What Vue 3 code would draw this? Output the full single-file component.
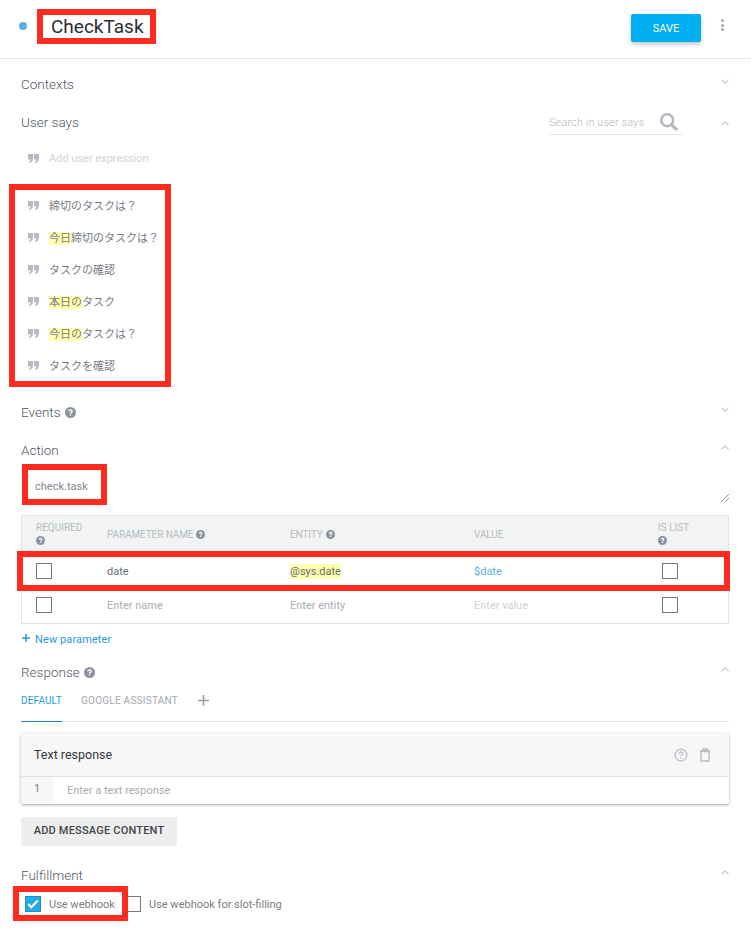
<script setup>
const expressions = [
  { mark: '', text: '締切のタスクは？' },
  { mark: '今日', text: '締切のタスクは？' },
  { mark: '', text: 'タスクの確認' },
  { mark: '本日の', text: 'タスク' },
  { mark: '今日の', text: 'タスクは？' },
  { mark: '', text: 'タスクを確認' }
]

const annotations = [
  { left: 37, top: 9, width: 119, height: 35 },
  { left: 9, top: 184, width: 162, height: 203 },
  { left: 22, top: 464, width: 85, height: 41 },
  { left: 17, top: 551, width: 713, height: 40 },
  { left: 13, top: 886, width: 115, height: 35 }
]
</script>

<template>
  <div class="page">
    <header class="top">
      <span class="dot" />
      <h1 class="title">CheckTask</h1>
      <button class="save">SAVE</button>
      <span class="more"><i /><i /><i /></span>
    </header>

    <main class="body">
      <div class="head">
        <span>Contexts</span>
        <svg class="chev" width="8" height="5" viewBox="0 0 8 5"><path d="M.4.6L4 4.2 7.6.6" /></svg>
      </div>

      <div class="head">
        <span>User says</span>
        <div class="search">
          <span class="search-text">Search in user says</span>
          <svg width="20" height="20" viewBox="0 0 20 20" fill="none" stroke="#b3b8c2">
            <circle cx="8.2" cy="8.2" r="6" stroke-width="2.6" />
            <path d="M12.6 12.6l5.6 5.6" stroke-width="3.2" />
          </svg>
        </div>
        <svg class="chev low" width="8" height="5" viewBox="0 0 8 5"><path d="M.4 4.4L4 .8l3.6 3.6" /></svg>
      </div>

      <div class="expr add">
        <svg class="quote" width="11" height="9" viewBox="0 0 11 9"><path d="M0 0h5v4.6C5 7 3.6 8.6 1.4 9L1 7.6c1-.3 1.5-1 1.5-2H0zM6 0h5v4.6C11 7 9.6 8.6 7.4 9L7 7.6c1-.3 1.5-1 1.5-2H6z" /></svg>
        <span>Add user expression</span>
      </div>

      <div class="expr-list">
        <div v-for="(e, i) in expressions" :key="i" class="expr">
          <svg class="quote" width="11" height="9" viewBox="0 0 11 9"><path d="M0 0h5v4.6C5 7 3.6 8.6 1.4 9L1 7.6c1-.3 1.5-1 1.5-2H0zM6 0h5v4.6C11 7 9.6 8.6 7.4 9L7 7.6c1-.3 1.5-1 1.5-2H6z" /></svg>
          <span><mark v-if="e.mark">{{ e.mark }}</mark>{{ e.text }}</span>
        </div>
      </div>

      <div class="head">
        <span class="with-help">Events
          <svg class="help big" viewBox="0 0 12 12"><circle cx="6" cy="6" r="6" /><path d="M4.2 4.7c0-1 .8-1.6 1.8-1.6s1.8.6 1.8 1.5c0 1.3-1.8 1.3-1.8 2.6M6 8v1.4" /></svg>
        </span>
        <svg class="chev" width="8" height="5" viewBox="0 0 8 5"><path d="M.4.6L4 4.2 7.6.6" /></svg>
      </div>

      <div class="head">
        <span>Action</span>
        <svg class="chev" width="8" height="5" viewBox="0 0 8 5"><path d="M.4 4.4L4 .8l3.6 3.6" /></svg>
      </div>

      <div class="action">
        <span>check.task</span>
        <svg class="grip" width="8" height="8" viewBox="0 0 8 8"><path d="M0 8l8-8M4 8l4-4" /></svg>
      </div>

      <div class="table">
        <div class="row thead">
          <div class="c-req">REQUIRED<svg class="help" viewBox="0 0 12 12"><circle cx="6" cy="6" r="6" /><path d="M4.2 4.7c0-1 .8-1.6 1.8-1.6s1.8.6 1.8 1.5c0 1.3-1.8 1.3-1.8 2.6M6 8v1.4" /></svg></div>
          <div class="inline">PARAMETER NAME<svg class="help" viewBox="0 0 12 12"><circle cx="6" cy="6" r="6" /><path d="M4.2 4.7c0-1 .8-1.6 1.8-1.6s1.8.6 1.8 1.5c0 1.3-1.8 1.3-1.8 2.6M6 8v1.4" /></svg></div>
          <div class="inline">ENTITY<svg class="help" viewBox="0 0 12 12"><circle cx="6" cy="6" r="6" /><path d="M4.2 4.7c0-1 .8-1.6 1.8-1.6s1.8.6 1.8 1.5c0 1.3-1.8 1.3-1.8 2.6M6 8v1.4" /></svg></div>
          <div class="inline">VALUE</div>
          <div class="c-req">IS LIST<svg class="help" viewBox="0 0 12 12"><circle cx="6" cy="6" r="6" /><path d="M4.2 4.7c0-1 .8-1.6 1.8-1.6s1.8.6 1.8 1.5c0 1.3-1.8 1.3-1.8 2.6M6 8v1.4" /></svg></div>
        </div>
        <div class="row">
          <div><span class="box" /></div>
          <div class="val">date</div>
          <div class="val"><mark>@sys.date</mark></div>
          <div class="link">$date</div>
          <div><span class="box right" /></div>
        </div>
        <div class="row">
          <div><span class="box" /></div>
          <div class="ph">Enter name</div>
          <div class="ph">Enter entity</div>
          <div class="ph light">Enter value</div>
          <div><span class="box right" /></div>
        </div>
      </div>

      <div class="new-param">
        <svg width="8" height="8" viewBox="0 0 8 8"><path d="M4 0v8M0 4h8" /></svg>
        <span>New parameter</span>
      </div>

      <div class="head">
        <span class="with-help">Response
          <svg class="help big" viewBox="0 0 12 12"><circle cx="6" cy="6" r="6" /><path d="M4.2 4.7c0-1 .8-1.6 1.8-1.6s1.8.6 1.8 1.5c0 1.3-1.8 1.3-1.8 2.6M6 8v1.4" /></svg>
        </span>
        <svg class="chev" width="8" height="5" viewBox="0 0 8 5"><path d="M.4 4.4L4 .8l3.6 3.6" /></svg>
      </div>

      <div class="tabs">
        <span class="tab active">DEFAULT</span>
        <span class="tab">GOOGLE ASSISTANT</span>
        <svg class="plus" width="11" height="11" viewBox="0 0 11 11"><path d="M5.5 0v11M0 5.5h11" /></svg>
      </div>

      <div class="card">
        <div class="card-head">
          <span>Text response</span>
          <div class="card-icons">
            <svg width="14" height="14" viewBox="0 0 14 14" fill="none" stroke="#b9bdc6" stroke-width="1.3"><circle cx="7" cy="7" r="5.8" /><path d="M5.2 5.6c0-1 .8-1.6 1.8-1.6s1.8.6 1.8 1.5c0 1.2-1.8 1.2-1.8 2.5M7 9v1.3" /></svg>
            <svg width="12" height="14" viewBox="0 0 12 14" fill="none" stroke="#b9bdc6" stroke-width="1.4"><path d="M2 3.5h8V13H2zM.8 2.6h10.4M4 2.4V1h4v1.4" /></svg>
          </div>
        </div>
        <div class="card-row">
          <span class="num">1</span>
          <span class="card-input">Enter a text response</span>
        </div>
      </div>

      <button class="add-btn">ADD MESSAGE CONTENT</button>

      <div class="head">
        <span>Fulfillment</span>
        <svg class="chev" width="8" height="5" viewBox="0 0 8 5"><path d="M.4 4.4L4 .8l3.6 3.6" /></svg>
      </div>

      <div class="hooks">
        <span class="box checked">
          <svg width="12" height="10" viewBox="0 0 12 10" fill="none" stroke="#fff" stroke-width="2.2"><path d="M1.2 5l3.2 3.2L10.8 1.4" /></svg>
        </span>
        <span class="hook-label first">Use webhook</span>
        <span class="box thin" />
        <span class="hook-label">Use webhook for slot-filling</span>
      </div>
    </main>

    <div
      v-for="(a, i) in annotations"
      :key="'a' + i"
      class="annotation"
      :style="{ left: a.left + 'px', top: a.top + 'px', width: a.width + 'px', height: a.height + 'px' }"
    />
  </div>
</template>

<style scoped>
.page {
  position: relative;
  width: 751px;
  height: 933px;
  overflow: hidden;
  background: #fff;
  font-family: Roboto, "Noto Sans CJK JP", sans-serif;
  color: #5f6875;
}

.top {
  display: flex;
  align-items: center;
  height: 59px;
  padding: 0 27px 6px 19px;
  box-sizing: border-box;
  border-bottom: 1px solid #e4e6e8;
}

.dot {
  width: 8px;
  height: 8px;
  border-radius: 50%;
  background: #57aee8;
  margin-right: 24px;
}

.title {
  margin: 0;
  flex: 1;
  font-size: 19px;
  font-weight: 400;
  color: #2a2d33;
}

.save {
  width: 70px;
  height: 28px;
  margin: 4px 19px 0 0;
  border: 0;
  border-radius: 2px;
  background: #00aef2;
  color: #fff;
  font: 400 11px Roboto, sans-serif;
  box-shadow: 0 2px 4px rgba(0, 0, 0, 0.25);
}

.more {
  display: flex;
  flex-direction: column;
  align-items: center;
  width: 4px;
  gap: 1.5px;
  margin-top: -2px;
}

.more i {
  width: 3px;
  height: 3px;
  border-radius: 50%;
  background: #a3a8b2;
}

.body {
  padding: 6px 22px 0 21px;
}

.head {
  display: flex;
  align-items: center;
  height: 38px;
  font-size: 13.5px;
  font-weight: 300;
  color: #4f5763;
}

.head > span:first-child {
  flex: 1;
}

.with-help {
  display: flex;
  align-items: center;
  gap: 4px;
}

.chev {
  margin-top: -5px;
  fill: none;
  stroke: #c2c6cd;
  stroke-width: 1.1;
}

.chev.low {
  margin-top: 2px;
}

.search {
  display: flex;
  align-items: center;
  justify-content: space-between;
  width: 134px;
  height: 24px;
  margin: 0 38px 0 0;
  border-bottom: 1px solid #e2e4e7;
  font-size: 11px;
  letter-spacing: 0.1px;
  color: #b3b7bf;
}

.search-text {
  margin-top: 2px;
}

.search svg {
  margin-right: 4px;
  margin-top: 1px;
}

.expr {
  display: flex;
  align-items: center;
  height: 32px;
  padding-left: 7px;
  font-size: 11px;
  color: #787d84;
}

.expr.add {
  margin-top: 1px;
  margin-bottom: 15px;
  color: #cfd2d9;
}

.expr-list {
  margin-bottom: 12px;
}

.quote {
  margin: 1px 10px 0 0;
  fill: #b5bac3;
}

mark {
  background: #ffffac;
  color: inherit;
}

.action {
  display: flex;
  justify-content: space-between;
  align-items: flex-start;
  height: 46px;
  padding: 11px 0 0 14px;
  box-sizing: border-box;
  font-size: 11px;
  color: #83878e;
}

.grip {
  margin-top: 14px;
  fill: none;
  stroke: #777;
  stroke-width: 0.8;
}

.table {
  border: 1px solid #e0e2e3;
  height: 109px;
  box-sizing: border-box;
}

.row {
  display: grid;
  grid-template-columns: 85px 183px 184px 184px 1fr;
  align-items: center;
  height: 34px;
  font-size: 11px;
}

.row > div:first-child {
  padding-left: 14px;
}

.row .box {
  display: block;
}

.thead {
  height: 38px;
  background: #f2f4f4;
  font-size: 10px;
  color: #b7bbc2;
}

.thead .inline {
  display: flex;
  align-items: center;
  gap: 3px;
  margin-top: -2px;
  letter-spacing: -0.1px;
}

.c-req {
  display: flex;
  flex-direction: column;
  align-items: flex-start;
  gap: 3px;
  margin-top: -3px;
  line-height: 11px;
}

.help {
  width: 9px;
  height: 9px;
  fill: #8d929e;
  stroke: #fff;
  stroke-width: 1.5;
  flex: none;
}

.help circle {
  stroke: none;
}

.help path {
  fill: none;
}

.help.big {
  width: 11px;
  height: 11px;
}

.box {
  width: 16px;
  height: 16px;
  box-sizing: border-box;
  border: 1px solid #777;
  flex: none;
}

.box.right {
  margin-left: 4px;
}

.val {
  color: #656b75;
}

.val mark {
  padding: 1px 0;
}

.link {
  color: #55ade6;
}

.ph {
  color: #a9acb2;
}

.ph.light {
  color: #cfd1d6;
}

.new-param {
  display: flex;
  align-items: center;
  gap: 5px;
  height: 22px;
  margin: 4px 0 3px 1px;
  font-size: 11px;
  letter-spacing: 0.1px;
  color: #2b9ae0;
}

.new-param svg {
  fill: none;
  stroke: #2b9ae0;
  stroke-width: 1.5;
  margin-top: -2px;
}

.tabs {
  display: flex;
  align-items: flex-start;
  height: 31px;
  box-sizing: border-box;
  border-bottom: 1px solid #e0e2e5;
  font-size: 10px;
}

.tab {
  height: 31px;
  padding-top: 4px;
  box-sizing: border-box;
  margin-right: 19px;
  color: #a4a8b0;
  line-height: 12px;
  letter-spacing: 0.25px;
}

.tab.active {
  color: #2b9ae0;
  border-bottom: 1px solid #1f86c9;
  letter-spacing: 0.15px;
}

.plus {
  margin: 4px 0 0 1px;
  fill: none;
  stroke: #9a9ea8;
  stroke-width: 1.6;
}

.card {
  margin-top: 11px;
  border-radius: 2px;
  box-shadow: 0 1px 3px rgba(0, 0, 0, 0.35);
  height: 71px;
}

.card-head {
  display: flex;
  align-items: center;
  justify-content: space-between;
  height: 44px;
  padding: 0 18px 0 13px;
  box-sizing: border-box;
  background: #f7f7f7;
  border-bottom: 1px solid #e3e3e3;
  font-size: 12.5px;
  color: #33373d;
}

.card-icons {
  display: flex;
  align-items: center;
  gap: 11px;
}

.card-row {
  display: flex;
  height: 27px;
  font-size: 11px;
}

.num {
  width: 32px;
  padding: 5px 0 0 13px;
  box-sizing: border-box;
  background: #f7f7f7;
  color: #7d8188;
}

.card-input {
  padding: 7px 0 0 14px;
  color: #a9acb2;
}

.add-btn {
  display: block;
  width: 156px;
  height: 29px;
  margin: 13px 0 10px;
  padding: 0 0 2px;
  border: 0;
  border-radius: 1px;
  background: #eeeeee;
  color: #41454c;
  font: 500 11px Roboto, sans-serif;
  letter-spacing: 0.2px;
}

.hooks {
  display: flex;
  align-items: center;
  height: 20px;
  padding-left: 4px;
  font-size: 11px;
  color: #787d84;
}

.box.checked {
  display: flex;
  align-items: center;
  justify-content: center;
  background: #23a9ec;
  border-color: #1d8fc9;
}

.box.thin {
  width: 14px;
}

.hook-label {
  margin-left: 8px;
}

.hook-label.first {
  width: 78px;
}

.annotation {
  position: absolute;
  box-sizing: border-box;
  border: 6px solid #ff2a20;
  pointer-events: none;
}
</style>
